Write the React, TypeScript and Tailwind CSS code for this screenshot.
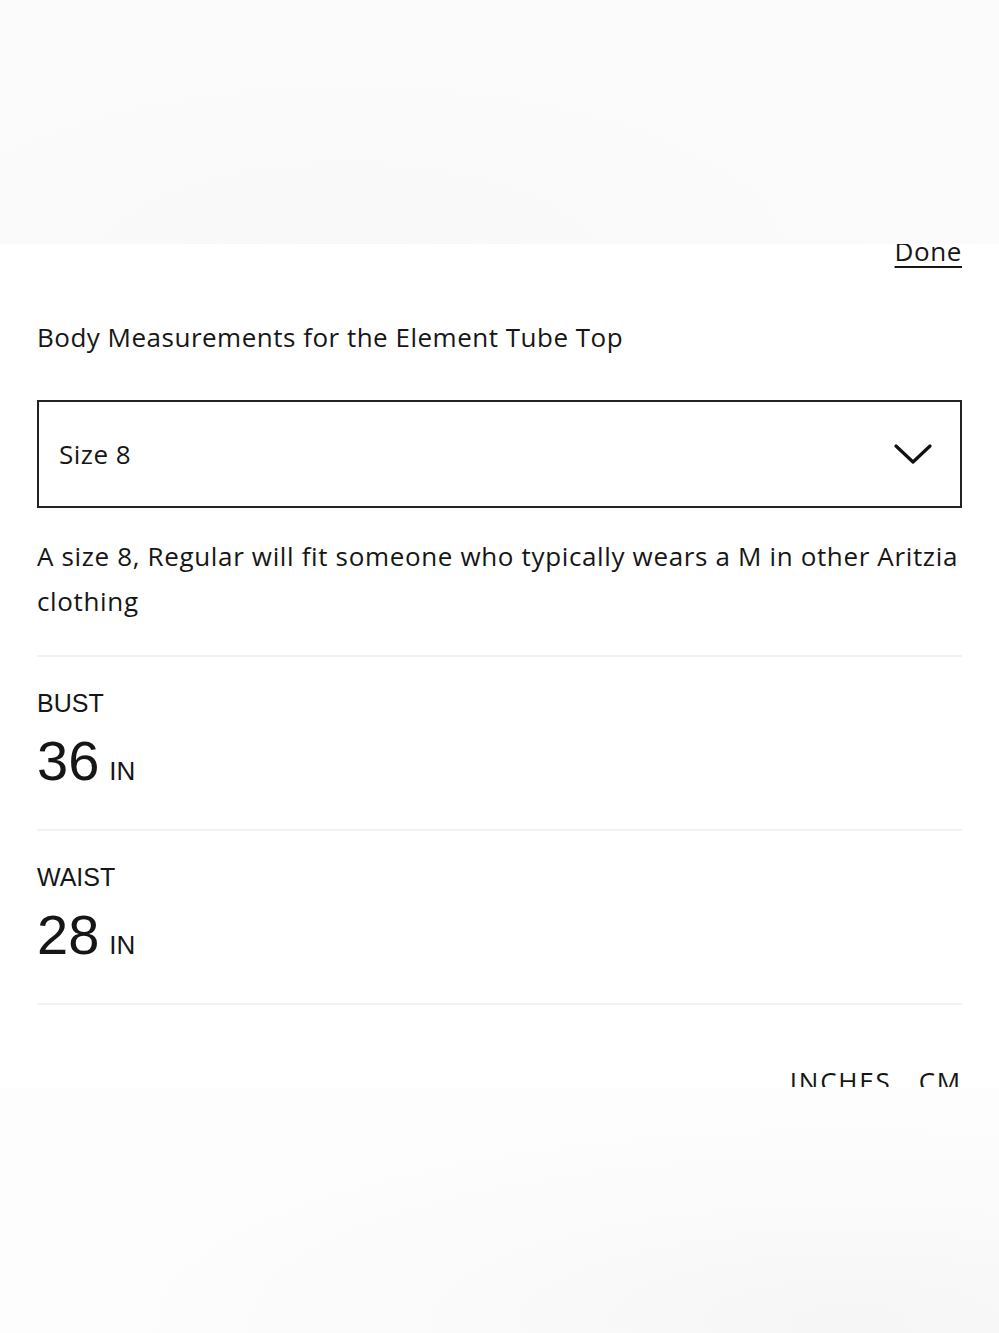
import { useState } from 'react';

type Measurement = {
  label: string;
  inches: number;
  cm: number;
};

const measurements: Measurement[] = [
  { label: 'BUST', inches: 36, cm: 91 },
  { label: 'WAIST', inches: 28, cm: 71 },
];

function Chevron() {
  return (
    <svg width="38" height="22" viewBox="0 0 38 22" fill="none">
      <path d="M2 3 L19 19 L36 3" stroke="#111" strokeWidth="3.2" strokeLinecap="round" strokeLinejoin="round" />
    </svg>
  );
}

export default function App() {
  const [unit, setUnit] = useState<'in' | 'cm'>('in');

  return (
    <div className="min-h-[1333px] flex flex-col text-[#161616] font-['Open_Sans',sans-serif]">
      <div className="h-[244px] bg-[radial-gradient(ellipse_at_35%_110%,#f8f8f8,#fbfbfb_70%)]" />

      <div className="h-[843px] overflow-hidden bg-white px-[37px]">
        <div className="flex justify-end -mt-[9px]">
          <button className="text-[26px] leading-[32px] tracking-[0.6px] underline decoration-2 underline-offset-[5px]">Done</button>
        </div>

        <h2 className="mt-[52px] text-[26px] leading-[36px] tracking-[0.5px]">Body Measurements for the Element Tube Top</h2>

        <button className="mt-[45px] h-[108px] w-full border-2 border-[#222] flex items-center justify-between pl-[20px] pr-[28px]">
          <span className="text-[26px] tracking-[0.5px]">Size 8</span>
          <Chevron />
        </button>

        <p className="mt-[26px] text-[26px] leading-[45px] tracking-[0.65px]">
          A size 8, Regular will fit someone who typically wears a M in other Aritzia clothing
        </p>

        <div className="mt-[31px] border-t-2 border-[#f2f2f2]">
          {measurements.map((m) => (
            <div key={m.label} className="h-[174px] border-b-2 border-[#f2f2f2] pt-[31px]">
              <div className="text-[25px] leading-[30px] font-['Liberation_Sans',sans-serif]">{m.label}</div>
              <div className="mt-[13px] flex items-baseline gap-[10px] font-['Liberation_Sans',sans-serif]">
                <span className="text-[56px] leading-[60px]">{unit === 'in' ? m.inches : m.cm}</span>
                <span className="text-[26px]">{unit === 'in' ? 'IN' : 'CM'}</span>
              </div>
            </div>
          ))}
        </div>

        <div className="mt-[60px] flex justify-end gap-[27px] text-[26px] leading-[32px] tracking-[1.8px]">
          <button onClick={() => setUnit('in')}>INCHES</button>
          <button onClick={() => setUnit('cm')}>CM</button>
        </div>
      </div>

      <div className="flex-1 bg-[radial-gradient(ellipse_at_85%_95%,#f6f6f6,#fdfdfd_60%)]" />
    </div>
  );
}
